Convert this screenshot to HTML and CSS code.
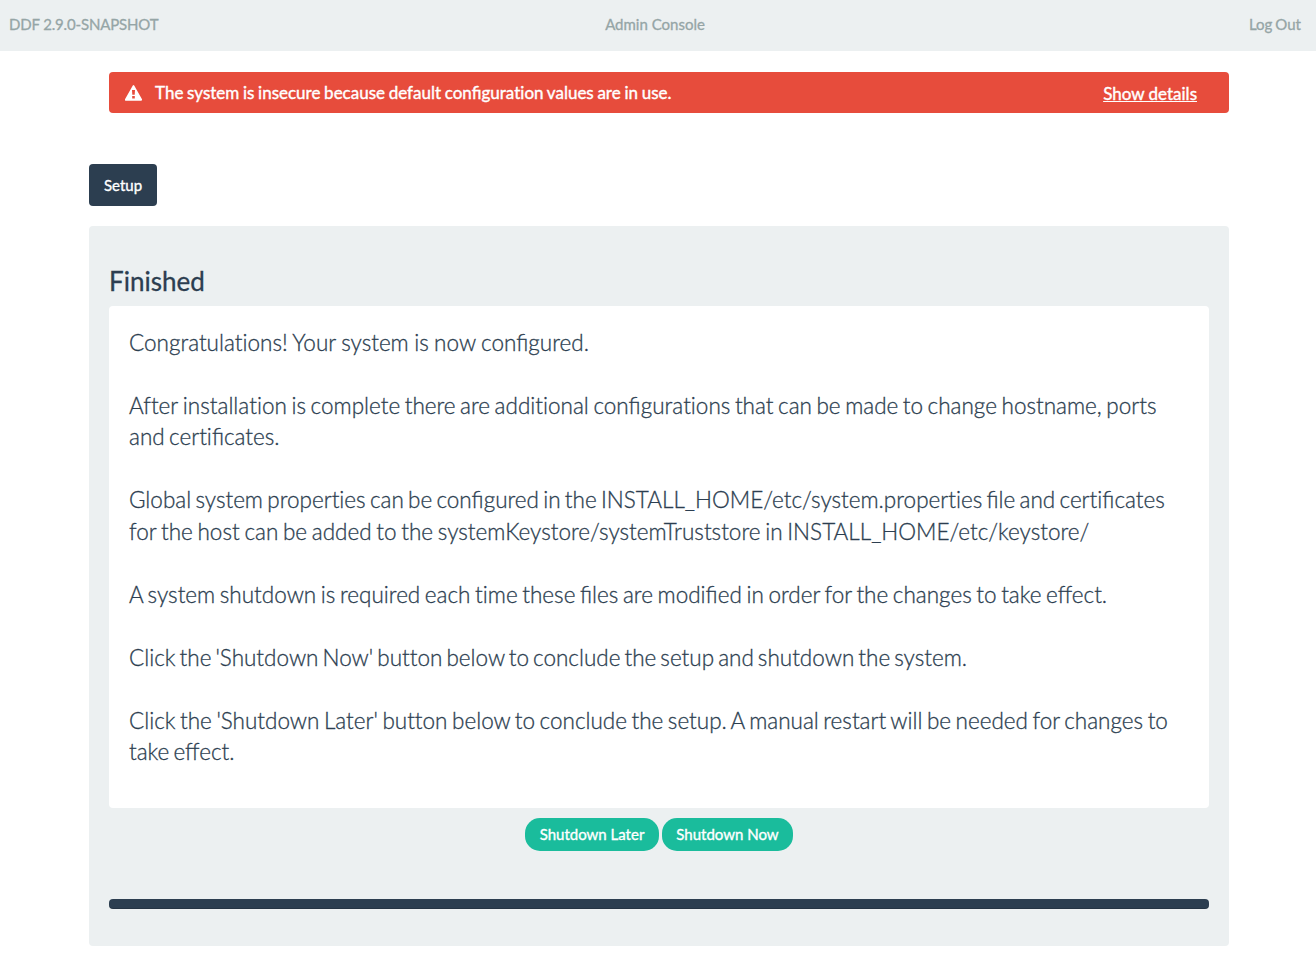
FILE: index.html
```html
<!DOCTYPE html>
<html lang="en">
<head>
<meta charset="utf-8">
<title>Admin Console</title>
<link rel="stylesheet" href="styles.css">
</head>
<body>
<header class="topbar">
  <span class="brand">DDF 2.9.0-SNAPSHOT</span>
  <span class="title">Admin Console</span>
  <a class="logout">Log Out</a>
</header>
<main class="container">
  <div class="alert">
    <svg class="warn" viewBox="0 0 18 16"><path fill="#fff" fill-rule="evenodd" d="M7.8.6Q8.5-.5 9.2.6L17 14.3Q17.3 15.7 16 15.7H1Q-.3 15.7 0 14.3ZM7 5 7.3 9.7H9.7L10 5ZM7.2 11V13.6H9.8V11Z"/></svg>
    <span class="message">The system is insecure because default configura<span class="nl">ti</span>on values are in use.</span>
    <a class="details">Show details</a>
  </div>
  <button class="tab">Setup</button>
  <section class="panel">
    <h1 class="heading">Finished</h1>
    <div class="content">
      <p><span class="line l1">Congratula<span class="nl">ti</span>ons! Your system is now configured.</span></p>
      <p><span class="line l2"><span class="nl">After</span> installa<span class="nl">ti</span>on is complete there are addi<span class="nl">ti</span>onal configura<span class="nl">ti</span>ons that can be made to change hostname, ports</span><span class="line l3">and cer<span class="nl">ti</span>ficates.</span></p>
      <p><span class="line l4">Global system proper<span class="nl">ti</span>es can be configured in the INSTALL_HOME/etc/system.proper<span class="nl">ti</span>es file and cer<span class="nl">ti</span>ficates</span><span class="line l5">for the host can be added to the systemKeystore/systemTruststore in INSTALL_HOME/etc/keystore/</span></p>
      <p><span class="line l6">A system shutdown is required each <span class="nl">ti</span>me these files are modified in order for the changes to take effect.</span></p>
      <p><span class="line l7">Click the 'Shutdown Now' bu<span class="nl">tt</span>on below to conclude the setup and shutdown the system.</span></p>
      <p><span class="line l8">Click the 'Shutdown Later' bu<span class="nl">tt</span>on below to conclude the setup. A manual restart will be needed for changes to</span><span class="line l9">take effect.</span></p>
    </div>
    <div class="actions">
      <button class="pill later">Shutdown Later</button>
      <button class="pill now">Shutdown Now</button>
    </div>
    <div class="progress"></div>
  </section>
</main>
</body>
</html>
```
FILE: styles.css
```css
* { box-sizing: border-box; }
body { margin: 0; background: #fff; color: #2c3e50; font-family: Lato, sans-serif; -webkit-text-stroke: .3px currentColor; }
button { font-family: inherit; border: 0; -webkit-text-stroke: .35px currentColor; }
.nl { font-variant-ligatures: none; }
.topbar { display: grid; grid-template-columns: 1fr auto 1fr; height: 51px; padding: 0 15px 3px 9px; align-items: center; background: #ecf0f1; color: #95a5a6; font-size: 15px; }
.brand { letter-spacing: -.16px; }
.logout { text-align: right; word-spacing: -.8px; }
.container { width: 1140px; margin-left: 89px; padding-top: 21px; }
.alert { display: flex; align-items: center; height: 41px; margin-left: 20px; padding: 0 32px 0 16px; border-radius: 4px; background: #e74c3c; color: #fff; font-size: 17px; -webkit-text-stroke: .4px #fff; }
.message { word-spacing: -.65px; }
.warn { width: 18px; height: 16px; margin-right: 12px; }
.details { margin-left: auto; padding-top: 2px; text-decoration: underline; }
.tab { display: block; width: 68px; height: 42px; margin-top: 51px; border-radius: 4px; background: #2c3e50; color: #fff; font-size: 15px; padding: 0; }
.panel { height: 720px; margin-top: 20px; padding: 40px 20px 0; border-radius: 4px; background: #ecf0f1; }
.heading { margin: 0; height: 40px; font-size: 26px; line-height: 31px; font-weight: 400; }
.content { height: 502px; padding: 20.75px 20px; border-radius: 4px; background: #fff; font-size: 22.5px; line-height: 31.5px; font-weight: 300; }
.content p { margin: 0 0 31.5px; }
.line { display: block; width: max-content; white-space: nowrap; }
.l1 { word-spacing: -.7px; }
.l2 { word-spacing: -1.55px; }
.l3 { word-spacing: -1.7px; }
.l4 { word-spacing: -1.86px; }
.l5 { word-spacing: -1.4px; }
.l6 { word-spacing: -1.5px; }
.l7 { word-spacing: -2.05px; }
.l8 { word-spacing: -1.58px; }
.l9 { word-spacing: -2px; }
.actions { display: flex; justify-content: center; gap: 3px; margin-top: 10px; }
.pill { height: 33px; padding: 0 0 2px; border-radius: 15px; background: #1abc9c; color: #fff; font-size: 15px; }
.later { width: 134px; }
.now { width: 131px; }
.progress { height: 10px; margin-top: 48px; border-radius: 4px; background: #2c3e50; box-shadow: inset 0 -1px 0 rgba(0, 0, 0, .15); }
```
